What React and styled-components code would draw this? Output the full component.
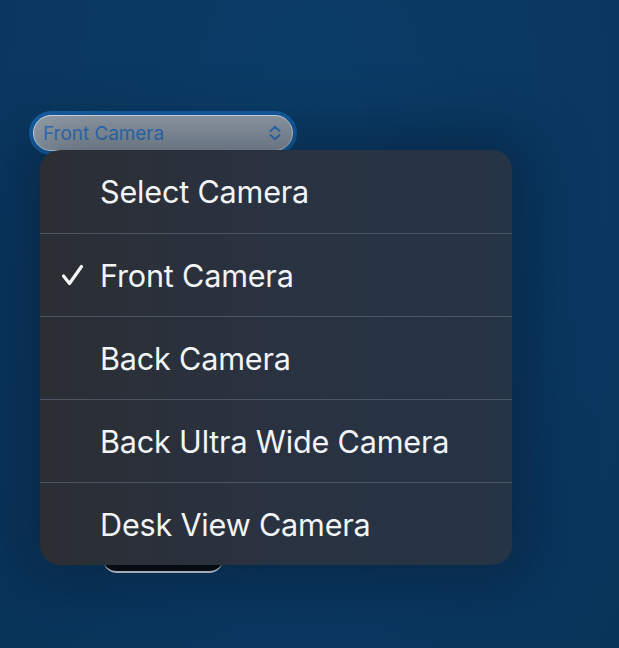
import React, { useState } from "react"
import styled, { createGlobalStyle } from "styled-components"

const Global = createGlobalStyle`
  html, body {
    margin: 0;
    padding: 0;
    height: 100%;
    background: #0b3a62;
  }
  body {
    font-family: Inter, "Liberation Sans", sans-serif;
    -webkit-font-smoothing: antialiased;
  }
`

const Page = styled.div`
  min-height: 648px;
  background: radial-gradient(ellipse at 50% 20%, #0b3d68 0%, #0a3760 70%, #093459 100%);
  padding: 111px 0 0 29px;
  box-sizing: border-box;
`

const Column = styled.div`
  position: relative;
  width: 268px;
  display: flex;
  flex-direction: column;
  align-items: center;
  gap: 382px;
`

const Ring = styled.div`
  width: 100%;
  padding: 4px;
  border-radius: 22px;
  background: #1560a6;
  box-sizing: border-box;
`

const SelectBox = styled.div`
  height: 36px;
  border-radius: 18px;
  border: 1.5px solid #e3e8ed;
  background: #9ca5ae;
  display: flex;
  align-items: center;
  justify-content: space-between;
  padding: 0 10px 0 9px;
  box-sizing: border-box;
  color: #3678c6;
  font-size: 18.9px;
`

const StartButton = styled.button`
  width: 120px;
  height: 40px;
  border-radius: 14px;
  background: #050608;
  border: none;
  border-bottom: 2px solid #e8edf2;
  margin-top: -4px;
`

const Menu = styled.div`
  position: absolute;
  top: 39px;
  left: 11px;
  width: 472px;
  border-radius: 20px;
  overflow: hidden;
  background: linear-gradient(90deg, #2b2e33 0%, #2a3240 45%, #253446 100%);
  box-shadow: 0 0 60px 20px rgba(5, 25, 45, 0.45);
`

const Item = styled.div`
  height: 83px;
  display: flex;
  align-items: center;
  padding-left: 21px;
  color: #f2f4f6;
  font-size: 30.6px;
  letter-spacing: -0.2px;
  box-sizing: border-box;
  border-top: ${(p) => (p.$first ? "none" : "1px solid #4c5663")};
`

const CheckSlot = styled.span`
  width: 39px;
  display: flex;
  align-items: center;
`

const cameras = ["Select Camera", "Front Camera", "Back Camera", "Back Ultra Wide Camera", "Desk View Camera"]

export default function App() {
  const [selected] = useState("Front Camera")
  return (
    <>
      <Global />
      <Page>
        <Column>
          <Ring>
            <SelectBox>
              <span>{selected}</span>
              <svg width="14" height="16" viewBox="0 0 14 16" fill="none" stroke="#3678c6" strokeWidth="2" strokeLinecap="round" strokeLinejoin="round">
                <path d="M2.5 6 L7 1.8 L11.5 6" />
                <path d="M2.5 10 L7 14.2 L11.5 10" />
              </svg>
            </SelectBox>
          </Ring>
          <StartButton />
          <Menu>
            {cameras.map((c, i) => (
              <Item key={c} $first={i === 0}>
                <CheckSlot>
                  {c === selected && (
                    <svg width="23" height="22" viewBox="0 0 23 22" fill="none" stroke="#f4f6f8" strokeWidth="3.2" strokeLinecap="round" strokeLinejoin="round">
                      <path d="M2.5 12 L8.5 19.5 L20.5 2.5" />
                    </svg>
                  )}
                </CheckSlot>
                {c}
              </Item>
            ))}
          </Menu>
        </Column>
      </Page>
    </>
  )
}
